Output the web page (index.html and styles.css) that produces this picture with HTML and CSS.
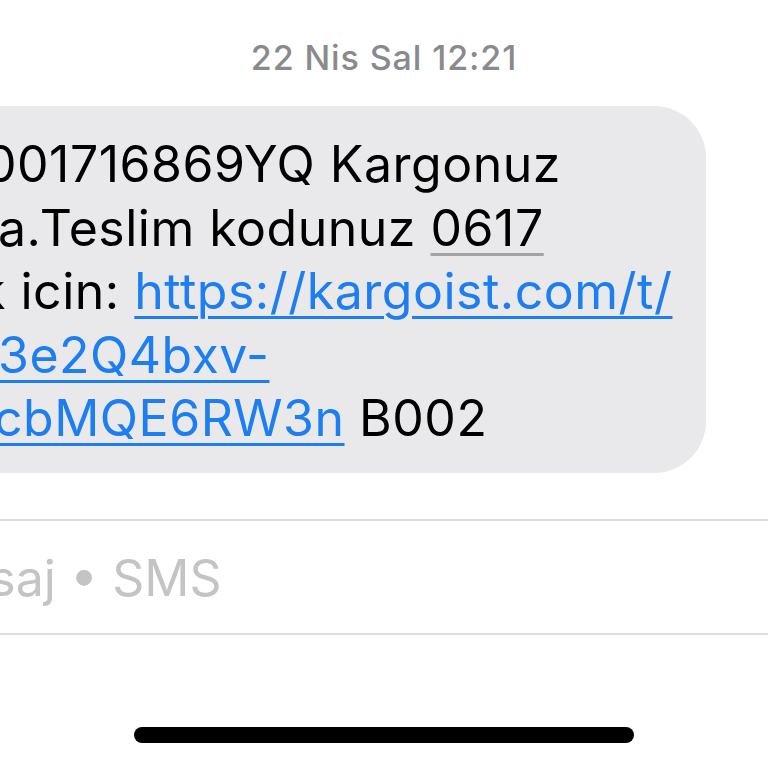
FILE: index.html
```html
<!DOCTYPE html>
<html lang="tr">
<head>
<meta charset="utf-8">
<title>Mesajlar</title>
<link rel="stylesheet" href="styles.css">
</head>
<body>
<div class="screen">
  <div class="stamp">22 Nis Sal 12:21</div>
  <div class="bubble">
    <div class="line l1">001716869YQ Kargonuz</div>
    <div class="line l2">a.Teslim kodunuz <span class="code">0617</span></div>
    <div class="line l3">k icin: <a class="link" href="#">https://kargoist.com/t/</a></div>
    <div class="line l4"><a class="link" href="#">3e2Q4bxv-</a></div>
    <div class="line l5"><a class="link" href="#">cbMQE6RW3n</a> B002</div>
  </div>
  <div class="composer"><span class="placeholder">Mesaj • SMS</span></div>
  <div class="home-bar"></div>
</div>
</body>
</html>
```
FILE: styles.css
```css
* { box-sizing: border-box; }
html, body {
  margin: 0;
  padding: 0;
  background: #ffffff;
}
body {
  width: 768px;
  height: 768px;
  overflow: hidden;
  font-family: Inter, "Liberation Sans", sans-serif;
}
.screen {
  display: flex;
  flex-direction: column;
  width: 768px;
  height: 768px;
}
.stamp {
  padding-top: 38px;
  height: 78px;
  font-size: 34px;
  line-height: 40px;
  letter-spacing: 0.9px;
  color: #8a8a8e;
  text-align: center;
  font-weight: 500;
}
.bubble {
  margin-top: 28px;
  margin-left: -300px;
  width: 1006px;
  padding: 27px 0 22px 300px;
  background: #e9e9eb;
  border-radius: 52px;
  font-size: 50px;
  line-height: 63.5px;
  letter-spacing: 0.5px;
  color: #000;
}
.line { white-space: nowrap; }
.l1 { margin-left: -15px; }
.l2 { margin-left: -2px; }
.l3 { margin-left: -22px; }
.l4 { margin-left: -2px; }
.l5 { margin-left: -6px; }
.link {
  color: #1c7ef0;
  text-decoration: underline;
  text-decoration-thickness: 3px;
  text-underline-offset: 7px;
}
.code {
  text-decoration: underline;
  text-decoration-color: #a3a3a3;
  text-decoration-thickness: 3px;
  text-underline-offset: 7px;
}
.composer {
  margin-top: 46px;
  height: 116px;
  border-top: 2px solid #dedede;
  border-bottom: 2px solid #dedede;
  padding-top: 26px;
  font-size: 50px;
  line-height: 63.5px;
  color: #c4c4c6;
  white-space: nowrap;
}
.placeholder { margin-left: -85px; }
.home-bar {
  align-self: center;
  margin-top: 92px;
  width: 500px;
  height: 16px;
  border-radius: 8px;
  background: #000;
}
```
